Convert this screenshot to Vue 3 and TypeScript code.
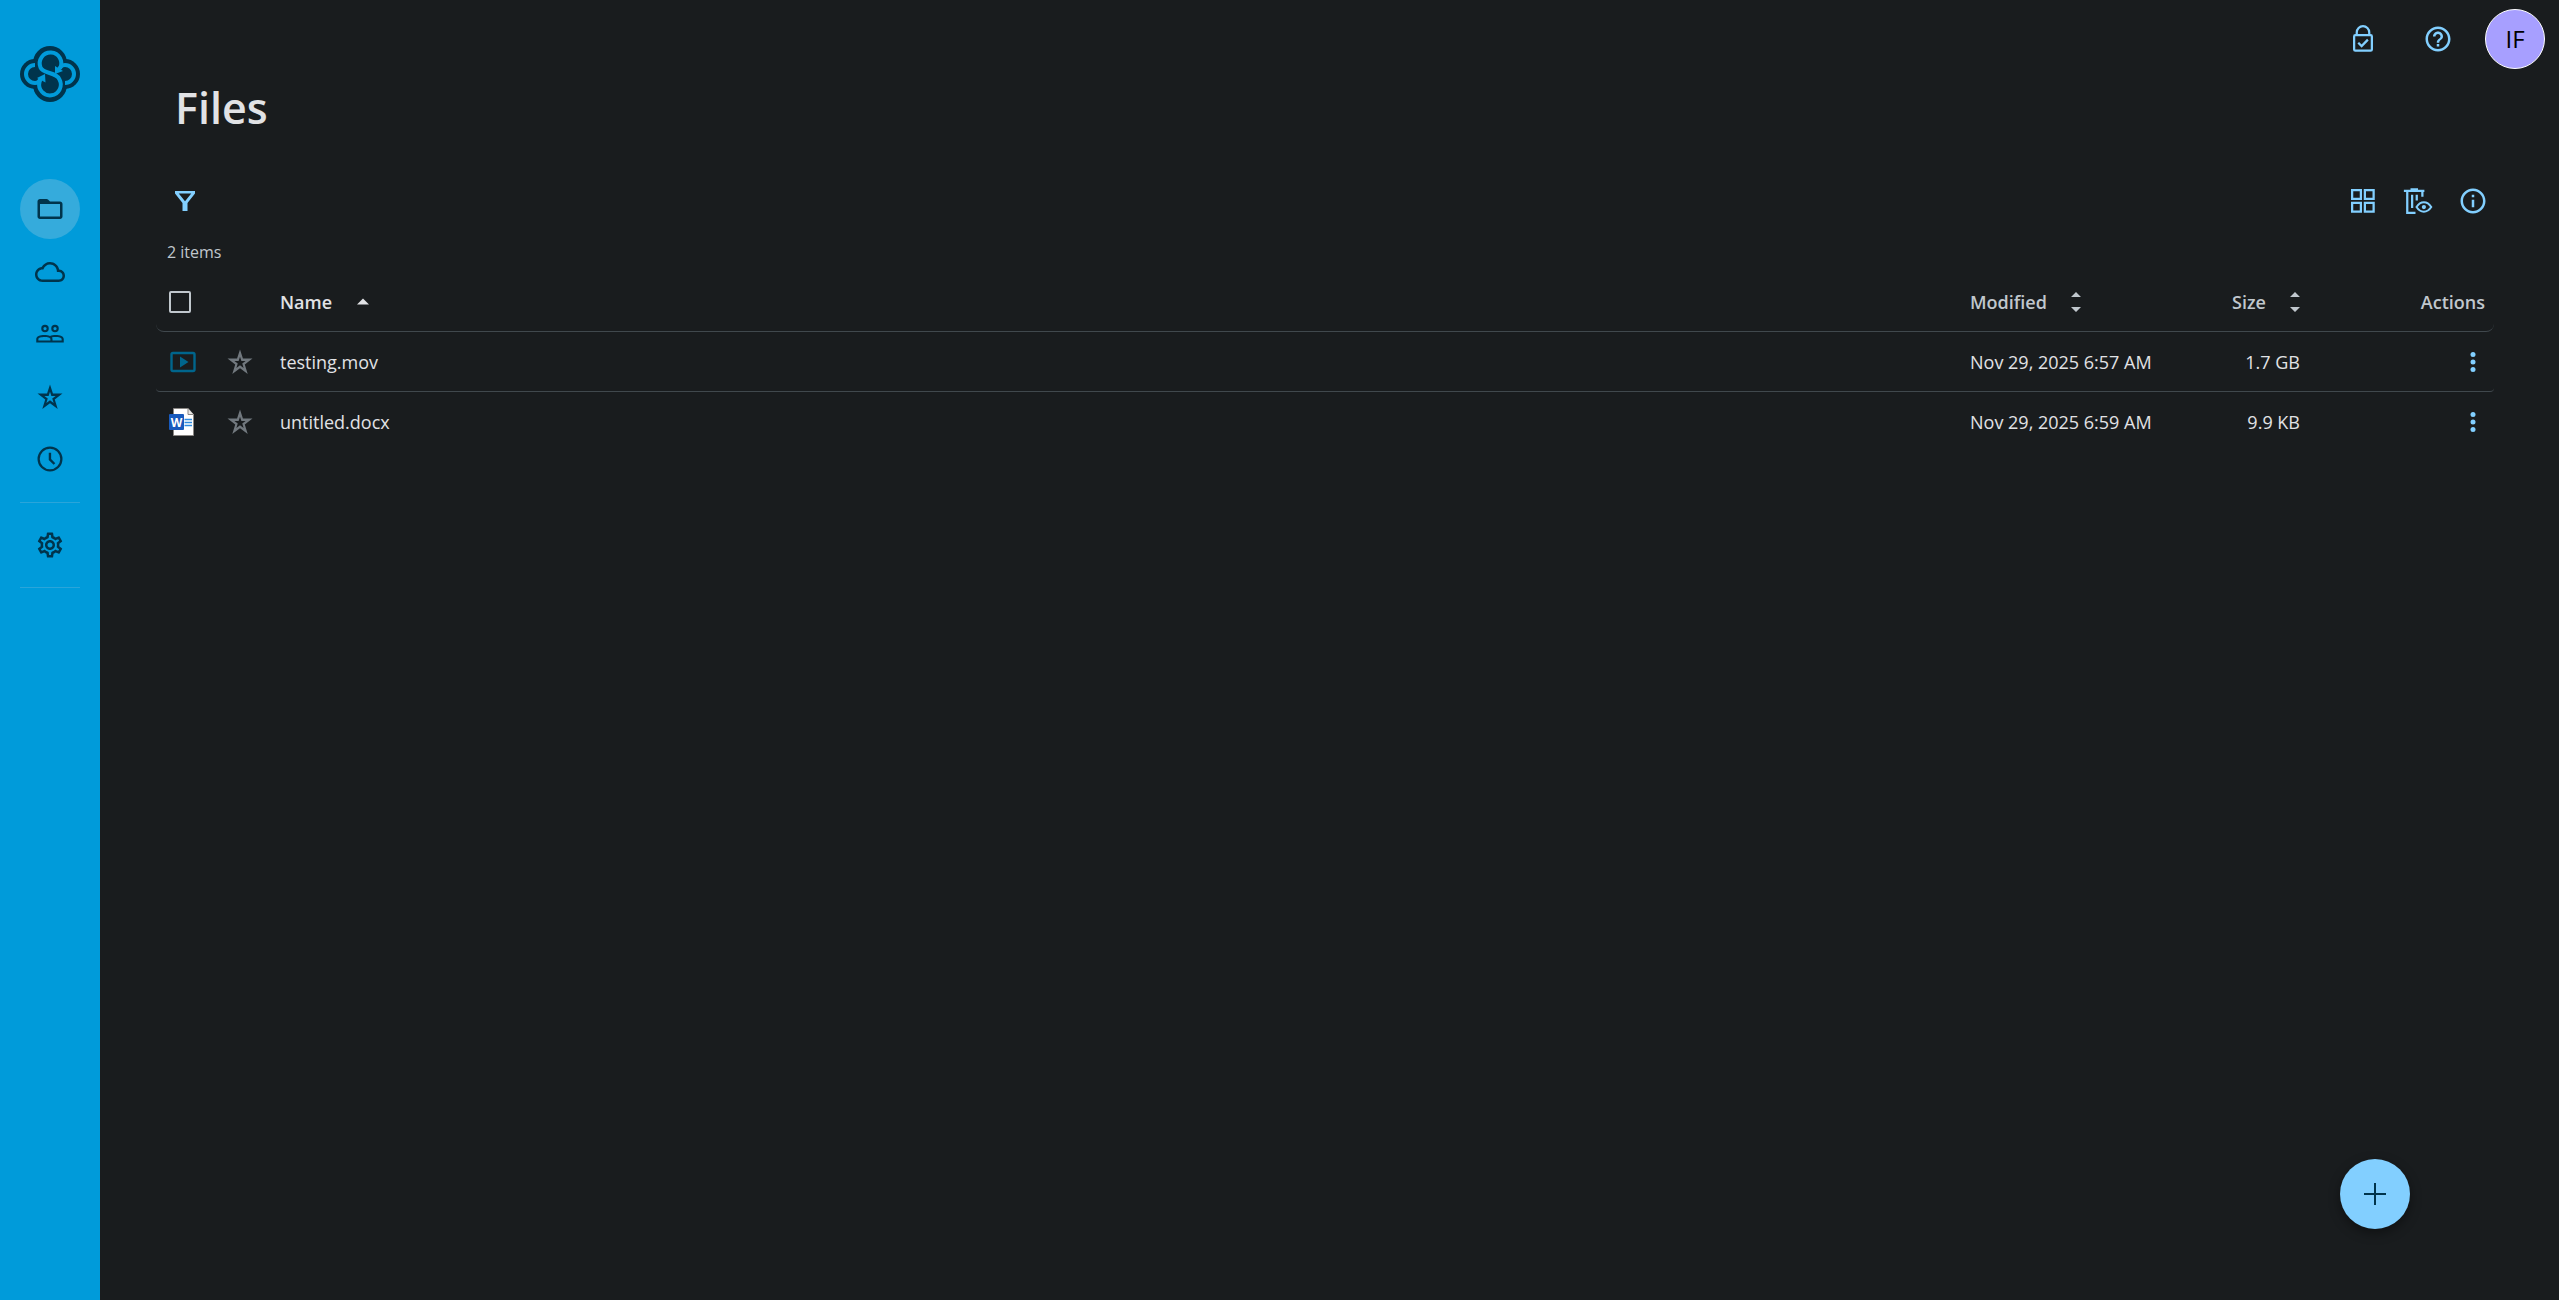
<script setup lang="ts">
import { ref } from 'vue'

interface NavItem {
  label: string
  path: string
  active?: boolean
}

interface FileRow {
  name: string
  kind: 'video' | 'word'
  modified: string
  size: string
}

const gear =
  'M19.43 12.98c.04-.32.07-.64.07-.98 0-.34-.03-.66-.07-.98l2.11-1.65c.19-.15.24-.42.12-.64l-2-3.46c-.09-.16-.26-.25-.44-.25-.06 0-.12.01-.17.03l-2.49 1c-.52-.4-1.08-.73-1.69-.98l-.38-2.65C14.46 2.18 14.25 2 14 2h-4c-.25 0-.46.18-.49.42l-.38 2.65c-.61.25-1.17.59-1.69.98l-2.49-1c-.06-.02-.12-.03-.18-.03-.17 0-.34.09-.43.25l-2 3.46c-.13.22-.07.49.12.64l2.11 1.65c-.04.32-.07.65-.07.98 0 .33.03.66.07.98l-2.11 1.65c-.19.15-.24.42-.12.64l2 3.46c.09.16.26.25.44.25.06 0 .12-.01.17-.03l2.49-1c.52.4 1.08.73 1.69.98l.38 2.65c.03.24.24.42.49.42h4c.25 0 .46-.18.49-.42l.38-2.65c.61-.25 1.17-.59 1.69-.98l2.49 1c.06.02.12.03.18.03.17 0 .34-.09.43-.25l2-3.46c.12-.22.07-.49-.12-.64l-2.11-1.65zm-1.98-1.71c.04.31.05.52.05.73 0 .21-.02.43-.05.73l-.14 1.13.89.7 1.08.84-.7 1.21-1.27-.51-1.04-.42-.9.68c-.43.32-.84.56-1.25.73l-1.06.43-.16 1.13-.2 1.35h-1.4l-.19-1.35-.16-1.13-1.06-.43c-.43-.18-.83-.41-1.23-.71l-.91-.7-1.06.43-1.27.51-.7-1.21 1.08-.84.89-.7-.14-1.13c-.03-.31-.05-.54-.05-.74s.02-.43.05-.73l.14-1.13-.89-.7-1.08-.84.7-1.21 1.27.51 1.04.42.9-.68c.43-.32.84-.56 1.25-.73l1.06-.43.16-1.13.2-1.35h1.39l.19 1.35.16 1.13 1.06.43c.43.18.83.41 1.23.71l.91.7 1.06-.43 1.27-.51.7 1.21-1.07.85-.89.7.14 1.13zM12 8c-2.21 0-4 1.79-4 4s1.79 4 4 4 4-1.79 4-4-1.79-4-4-4zm0 6c-1.1 0-2-.9-2-2s.9-2 2-2 2 .9 2 2-.9 2-2 2z'

const star =
  'M22 9.24h-7.640L12 2 9.640 9.240H2l6.180 4.730L5.830 21.500 12 16.900l6.180 4.600-2.360-7.530L22 9.240zM12 14.600l-2.900 2.100 1.100-3.480-2.700-2.080h3.400L12 7.700l1.100 3.440h3.400l-2.700 2.080 1.100 3.480z'

const nav: NavItem[] = [
  {
    label: 'Files',
    active: true,
    path: 'M20 6h-8l-1.4-1.4C10.2 4.2 9.7 4 9.2 4H4c-1.1 0-2 .9-2 2v12c0 1.1.9 2 2 2h16c1.1 0 2-.9 2-2V8c0-1.1-.9-2-2-2zm0 12H4V8h16v10z',
  },
  {
    label: 'Cloud',
    path: 'M19.35 10.04C18.67 6.59 15.64 4 12 4 9.11 4 6.6 5.64 5.35 8.04 2.34 8.36 0 10.91 0 14c0 3.31 2.69 6 6 6h13c2.76 0 5-2.24 5-5 0-2.64-2.05-4.78-4.65-4.96zM19 18H6c-2.21 0-4-1.79-4-4s1.79-4 4-4h.71C7.37 7.69 9.48 6 12 6c3.04 0 5.5 2.46 5.5 5.5v.5H19c1.66 0 3 1.34 3 3s-1.34 3-3 3z',
  },
  {
    label: 'Shared',
    path: 'M8 4.600a3 3 0 1 0 0 6 3 3 0 0 0 0-6zm0 1.700a1.300 1.300 0 1 1 0 2.600 1.300 1.300 0 0 1 0-2.600zM16 4.600a3 3 0 1 0 0 6 3 3 0 0 0 0-6zm0 1.700a1.300 1.300 0 1 1 0 2.600 1.300 1.300 0 0 1 0-2.600zM7.500 12.700C4 12.700 1 13.800 1 16v2.800h22V16c0-2.200-3-3.300-6.500-3.300-1.700 0-3.200.2-4.500.8-1.300-.6-2.800-.8-4.500-.8zM2.700 17.100V16c0-.9 2.300-1.600 4.800-1.600s4.800.7 4.800 1.600v1.100zM14 17.100V16c0-.5-.2-.9-.5-1.300.9-.2 1.900-.3 3-.3 2.500 0 4.800.7 4.800 1.600v1.100z',
  },
  { label: 'Starred', path: star },
  {
    label: 'Recent',
    path: 'M12 2a10 10 0 1 0 0 20 10 10 0 0 0 0-20zm0 18.2a8.2 8.2 0 1 1 0-16.4 8.2 8.2 0 0 1 0 16.4zM12.9 7H11v5.7l3.9 3.9 1.3-1.3-3.3-3.3z',
  },
]

const files: FileRow[] = [
  { name: 'testing.mov', kind: 'video', modified: 'Nov 29, 2025 6:57 AM', size: '1.7 GB' },
  { name: 'untitled.docx', kind: 'word', modified: 'Nov 29, 2025 6:59 AM', size: '9.9 KB' },
]

const allSelected = ref(false)
</script>

<template>
  <div class="app">
    <aside class="sidebar">
      <a class="logo" href="#" aria-label="Home">
        <svg width="60" height="56" viewBox="0 0 60 56">
          <g fill="#00344c">
            <circle cx="30" cy="17" r="17" />
            <circle cx="30" cy="39" r="17" />
            <circle cx="15" cy="28" r="15" />
            <circle cx="45" cy="28" r="15" />
          </g>
          <g fill="none" stroke="#009bda" stroke-width="4">
            <path d="M40 22.500A10.800 10.800 0 1 0 20.500 21.500C23 28 37 26 39.500 33.500A10.800 10.800 0 1 1 19.500 36L20 33" />
            <path d="M15 19a9 9 0 1 0 0 18c3 0 5-2 6-5" />
            <path d="M45 37a9 9 0 1 0 0-18c-3 0-6 3-7 6" />
          </g>
          <path d="M17 32l8-4 .5 8.500zM35 20v8l8-3z" fill="#009bda" />
        </svg>
      </a>
      <nav class="nav" aria-label="Main">
        <a v-for="item in nav" :key="item.label" href="#" class="nav-item" :class="{ active: item.active }" :aria-label="item.label">
          <svg width="30" height="30" viewBox="0 0 24 24" fill="currentColor"><path :d="item.path" /></svg>
        </a>
      </nav>
      <div class="nav-settings">
        <a href="#" class="nav-item" aria-label="Settings">
          <svg width="30" height="30" viewBox="0 0 24 24" fill="currentColor"><path :d="gear" /></svg>
        </a>
      </div>
    </aside>

    <div class="content">
      <header class="topbar">
        <button class="icon-btn" type="button" aria-label="Security">
          <svg width="30" height="30" viewBox="0 0 24 24" fill="none" stroke="currentColor" stroke-width="1.8">
            <rect x="4.900" y="8.900" width="14.200" height="12.400" rx="1" />
            <path d="M7 9V6.700a5 5 0 0 1 10 0V9" />
            <path d="M8.200 15l2.700 2.700 5-5.200" />
          </svg>
        </button>
        <button class="icon-btn" type="button" aria-label="Help">
          <svg width="30" height="30" viewBox="0 0 24 24" fill="currentColor">
            <path d="M11 18h2v-2h-2v2zm1-16C6.480 2 2 6.480 2 12s4.480 10 10 10 10-4.480 10-10S17.520 2 12 2zm0 18c-4.410 0-8-3.590-8-8s3.590-8 8-8 8 3.590 8 8-3.590 8-8 8zm0-14c-2.210 0-4 1.790-4 4h2c0-1.100.9-2 2-2s2 .9 2 2c0 2-3 1.750-3 5h2c0-2.250 3-2.500 3-5 0-2.210-1.790-4-4-4z" />
          </svg>
        </button>
        <button class="avatar" type="button" aria-label="Account">IF</button>
      </header>

      <main class="main">
        <h1>Files</h1>
        <div class="toolbar">
          <button class="tool" type="button" aria-label="Filter">
            <svg width="30" height="30" viewBox="0 0 24 24" fill="currentColor">
              <path d="M4 4h16v1.900L14 13.500V20h-4v-6.500L4 5.900zM7 5.900l5 6.200 5-6.200z" fill-rule="evenodd" />
            </svg>
          </button>
          <div class="tools">
            <button class="tool" type="button" aria-label="Grid view">
              <svg width="30" height="30" viewBox="0 0 24 24" fill="none" stroke="currentColor" stroke-width="1.8">
                <path d="M3.300 3.300h7v7h-7zM13.500 3.300h7v7h-7zM3.300 13.500h7v7h-7zM13.500 13.500h7v7h-7z" />
              </svg>
            </button>
            <button class="tool" type="button" aria-label="Show deleted files">
              <svg width="30" height="30" viewBox="0 0 24 24" fill="none" stroke="currentColor" stroke-width="1.8">
                <path d="M.7 3.800h16.400M6 2.600h6" />
                <path d="M3.400 4v17.400H10M7.300 7v10.500M11 7v4.500M15.500 4v4.500" />
                <path d="M10.800 16.800c3.200-5 8.600-5 11.800 0-3.200 5-8.600 5-11.800 0z" stroke-width="1.600" />
                <circle cx="16.700" cy="16.800" r="1.700" fill="currentColor" stroke="none" />
              </svg>
            </button>
            <button class="tool" type="button" aria-label="Details">
              <svg width="30" height="30" viewBox="0 0 24 24" fill="currentColor">
                <path d="M11 7h2v2h-2zm0 4h2v6h-2zm1-9C6.480 2 2 6.480 2 12s4.480 10 10 10 10-4.480 10-10S17.520 2 12 2zm0 18c-4.410 0-8-3.590-8-8s3.590-8 8-8 8 3.590 8 8-3.590 8-8 8z" />
              </svg>
            </button>
          </div>
        </div>
        <p class="count">2 items</p>

        <table>
          <colgroup>
            <col class="c-select" />
            <col class="c-star" />
            <col />
            <col class="c-modified" />
            <col class="c-size" />
            <col class="c-actions" />
          </colgroup>
          <thead>
            <tr>
              <th class="select"><input v-model="allSelected" type="checkbox" aria-label="Select all" /></th>
              <th></th>
              <th class="text sorted" aria-sort="ascending">
                <button class="sort" type="button">
                  Name
                  <svg width="14" height="7" viewBox="0 0 14 7" fill="currentColor"><path d="M1 6.500L7 .5l6 6z" /></svg>
                </button>
              </th>
              <th class="text">
                <button class="sort" type="button">
                  Modified
                  <svg width="10" height="20" viewBox="0 0 10 20" fill="currentColor"><path d="M0 5l5-5 5 5zM0 15l5 5 5-5z" /></svg>
                </button>
              </th>
              <th class="size">
                <button class="sort" type="button">
                  Size
                  <svg width="10" height="20" viewBox="0 0 10 20" fill="currentColor"><path d="M0 5l5-5 5 5zM0 15l5 5 5-5z" /></svg>
                </button>
              </th>
              <th class="actions">Actions</th>
            </tr>
          </thead>
          <tbody>
            <tr v-for="file in files" :key="file.name">
              <td class="select">
                <svg v-if="file.kind === 'video'" width="30" height="30" viewBox="0 0 30 30">
                  <rect x="3.500" y="6" width="23" height="18" rx="1.500" fill="none" stroke="#00658c" stroke-width="2.400" />
                  <path d="M12 9.500v11l8.500-5.500z" fill="#00658c" />
                </svg>
                <svg v-else width="30" height="30" viewBox="0 0 30 30">
                  <path d="M5.500 1.500H20l5.500 6v21h-20z" fill="#fff" stroke="#8a8784" />
                  <path d="M20 1.500v6h5.500" fill="#e8e6e4" stroke="#8a8784" />
                  <path d="M16.500 12.500H24M16.500 15.500H24M16.500 18.500H24" stroke="#2f8be0" stroke-width="1.500" />
                  <rect x="1" y="7" width="15" height="16" rx="1" fill="#185abd" />
                  <text x="8.500" y="19.500" text-anchor="middle" fill="#fff" font-size="12" font-weight="700">W</text>
                </svg>
              </td>
              <td class="star">
                <button type="button" :aria-label="`Star ${file.name}`">
                  <svg width="30" height="30" viewBox="0 0 24 24" fill="currentColor"><path :d="star" /></svg>
                </button>
              </td>
              <td class="text"><a href="#">{{ file.name }}</a></td>
              <td class="text">{{ file.modified }}</td>
              <td class="size">{{ file.size }}</td>
              <td class="actions">
                <button type="button" :aria-label="`Actions for ${file.name}`">
                  <svg width="24" height="24" viewBox="0 0 24 24" fill="currentColor">
                    <circle cx="12" cy="4.500" r="2.500" /><circle cx="12" cy="12" r="2.500" /><circle cx="12" cy="19.500" r="2.500" />
                  </svg>
                </button>
              </td>
            </tr>
          </tbody>
        </table>
      </main>
    </div>

    <button class="fab" type="button" aria-label="Add">
      <svg width="30" height="30" viewBox="0 0 30 30" fill="none" stroke="currentColor" stroke-width="2"><path d="M15 4v22M4 15h22" /></svg>
    </button>
  </div>
</template>

<style>
body {
  background: #191c1e;
}
</style>

<style scoped>
.app {
  display: flex;
  min-height: 100vh;
  background: #191c1e;
  color: #e1e2e5;
  font: 18px/24px "Open Sans", sans-serif;
}
svg {
  display: block;
}
button {
  border: 0;
  padding: 0;
  background: none;
  color: inherit;
  font: inherit;
  cursor: pointer;
}
a {
  color: inherit;
  text-decoration: none;
}
.sidebar {
  display: flex;
  flex: 0 0 100px;
  flex-direction: column;
  align-items: center;
  box-sizing: border-box;
  padding-top: 46px;
  background: #009bda;
  color: #00344c;
}
.nav {
  display: flex;
  flex-direction: column;
  justify-content: space-between;
  height: 310px;
  margin-top: 77px;
}
.nav-item {
  display: flex;
  align-items: center;
  justify-content: center;
  width: 60px;
  height: 60px;
  border-radius: 50%;
}
.nav-item.active {
  background: #35abdc;
}
.nav-settings {
  margin-top: 13px;
  padding: 12px 0;
  border: solid #2aa5da;
  border-width: 1px 0;
}
.content {
  flex: 1;
  min-width: 0;
}
.topbar {
  display: flex;
  justify-content: flex-end;
  align-items: center;
  gap: 15px;
  padding: 9px 14px 0 0;
}
.icon-btn {
  display: flex;
  align-items: center;
  justify-content: center;
  width: 60px;
  height: 60px;
  color: #82cfff;
}
.avatar {
  width: 60px;
  height: 60px;
  margin-left: 2px;
  box-sizing: border-box;
  border: 1px solid #fff;
  border-radius: 50%;
  background: #a79fff;
  color: #000;
  font-size: 24px;
}
.main {
  padding: 0 65px 0 56px;
}
h1 {
  margin: 9px 0 0 19px;
  font-size: 43px;
  line-height: 60px;
  font-weight: 600;
}
.toolbar {
  display: flex;
  justify-content: space-between;
  margin-top: 35px;
  padding: 0 6px 0 14px;
}
.tools {
  display: flex;
  gap: 25px;
}
.tool {
  display: flex;
  align-items: center;
  justify-content: center;
  width: 30px;
  height: 55px;
  color: #82cfff;
}
.count {
  margin: 14px 0 0 11px;
  color: #c0c7cd;
  font-size: 16px;
  line-height: 20px;
}
table {
  width: 100%;
  margin-top: 10px;
  table-layout: fixed;
  border-collapse: separate;
  border-spacing: 0;
}
.c-select {
  width: 55px;
}
.c-star {
  width: 57px;
}
.c-modified {
  width: 212px;
}
.c-size {
  width: 141px;
}
.c-actions {
  width: 183px;
}
th,
td {
  height: 59px;
  padding: 0;
  border-bottom: 1px solid #40484d;
  text-align: left;
  white-space: nowrap;
}
th {
  color: #c0c7cd;
  font-weight: 600;
}
th:first-child {
  border-bottom-left-radius: 8px;
}
th:last-child {
  border-bottom-right-radius: 8px;
}
td:first-child {
  border-bottom-left-radius: 4px;
}
td:last-child {
  border-bottom-right-radius: 4px;
}
tbody tr:last-child td {
  border-bottom-color: transparent;
}
.sorted {
  color: #e1e2e5;
}
.select {
  padding-left: 12px;
}
.select input {
  display: block;
  width: 22px;
  height: 22px;
  margin: 0 0 0 1px;
  border: 2px solid #c0c7cd;
  border-radius: 2px;
  appearance: none;
}
.star button {
  margin-left: 14px;
  color: #71787e;
}
.star button,
.actions button {
  display: block;
}
.text {
  padding-left: 12px;
}
.sort {
  display: inline-flex;
  align-items: center;
  gap: 24px;
}
.size {
  padding-right: 11px;
  text-align: right;
}
.actions {
  padding-right: 9px;
  text-align: right;
}
.actions button {
  margin-left: auto;
  color: #82cfff;
}
.fab {
  position: fixed;
  right: 149px;
  bottom: 71px;
  display: flex;
  align-items: center;
  justify-content: center;
  width: 70px;
  height: 70px;
  border-radius: 50%;
  background: #82cfff;
  color: #00344c;
  box-shadow: 0 4px 12px rgba(0, 0, 0, 0.4);
}
</style>
